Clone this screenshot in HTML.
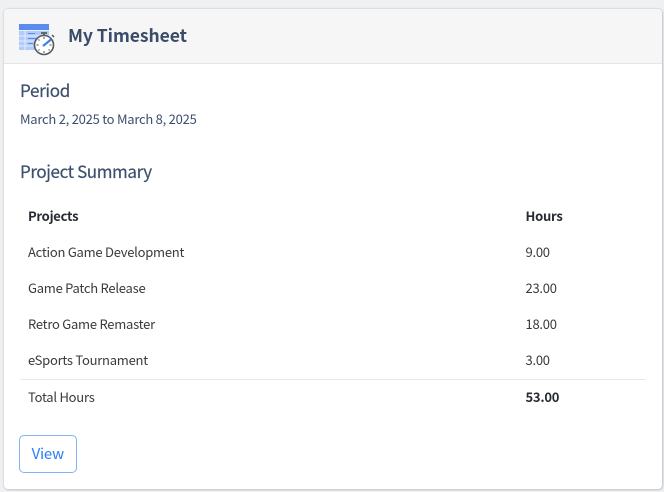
<!DOCTYPE html>
<html>
<head>
<meta charset="utf-8">
<style>
html,body{margin:0;padding:0;width:664px;height:492px;overflow:hidden;background:#eff0f2;}
body{font-family:"Noto Sans CJK JP","Liberation Sans",sans-serif;position:relative;}
.card{position:absolute;left:4px;top:9px;width:658px;height:480px;background:#fff;border-radius:4px;box-shadow:0 0 2px rgba(0,0,0,.2),1px 1px 2px rgba(0,0,0,.12);overflow:hidden;}
.head{position:absolute;left:0;top:0;width:658px;height:55px;background:#f6f6f7;border-bottom:1px solid #e6e6e8;box-sizing:border-box;}
.t{position:absolute;white-space:nowrap;line-height:20px;}
.h{color:#3c4f6d;}
.s{-webkit-text-stroke:.2px #3c4f6d;}
.b{color:#3a3a3a;font-size:13px;letter-spacing:-.25px;}
.bold{font-weight:700;color:#262b33;}
.line{position:absolute;left:19.500px;top:379px;width:626.500px;height:1px;background:#e8e8e8;}
.btn{position:absolute;left:19px;top:435px;width:57.500px;height:38px;box-sizing:border-box;border:1px solid #7fb2fd;border-radius:5px;color:#2b7cf6;font-size:15px;letter-spacing:-.2px;line-height:35px;text-align:center;background:#fff;}
</style>
</head>
<body>
<div class="card"><div class="head"></div></div>
<svg style="position:absolute;left:19px;top:24px" width="38" height="32" viewBox="0 0 38 32">
<rect x="0" y="0" width="30" height="26" fill="#b3cbfb"/>
<rect x="0" y="0" width="30" height="6" fill="#5a8cf0"/>
<rect x="0" y="6" width="30" height="1" fill="#e8effe"/>
<path d="M6 7v19M0 12h30M0 17h20M0 22h14" stroke="#e6eefe" stroke-width="1" fill="none"/>
<path d="M9 9.500h7M9 14.500h8M9 19.500h5" stroke="#5a8cf0" stroke-width="1" fill="none"/>
<rect x="22" y="8" width="6" height="2" fill="#666"/>
<rect x="24" y="9" width="2" height="3" fill="#666"/>
<path d="M33 11l2 2" stroke="#555" stroke-width="1.500"/>
<circle cx="25" cy="21" r="9.500" fill="#fff" stroke="#55585c" stroke-width="1.600"/>
<path d="M24 22L32 15.500" stroke="#3f80f2" stroke-width="2.200"/>
<path d="M25 13v2M25 27v2M17.500 21h2M30.500 21h2M19.500 15.500l1 1M29.500 25.500l1 1M19.500 26.500l1-1" stroke="#555" stroke-width="1"/>
</svg>
<div class="t h" style="left:68px;top:26px;font-size:17.500px;font-weight:700;color:#3a4c69;letter-spacing:-.05px;">My Timesheet</div>
<div class="t h s" style="left:20px;top:80px;font-size:17px;letter-spacing:-.3px;">Period</div>
<div class="t h" style="left:20px;top:108.500px;font-size:13px;letter-spacing:-.25px;">March 2, 2025 to March 8, 2025</div>
<div class="t h s" style="left:20px;top:161px;font-size:17px;letter-spacing:-.4px;">Project Summary</div>
<div class="t b bold" style="left:28px;top:205.500px;">Projects</div>
<div class="t b bold" style="left:525.500px;top:205.500px;">Hours</div>
<div class="t b" style="left:28px;top:241.500px;">Action Game Development</div>
<div class="t b" style="left:525.500px;top:241.500px;">9.00</div>
<div class="t b" style="left:28px;top:277.500px;">Game Patch Release</div>
<div class="t b" style="left:525.500px;top:277.500px;">23.00</div>
<div class="t b" style="left:28px;top:313.500px;">Retro Game Remaster</div>
<div class="t b" style="left:525.500px;top:313.500px;">18.00</div>
<div class="t b" style="left:28px;top:349.500px;">eSports Tournament</div>
<div class="t b" style="left:525.500px;top:349.500px;">3.00</div>
<div class="line"></div>
<div class="t b" style="left:28px;top:386.500px;">Total Hours</div>
<div class="t b bold" style="left:525.500px;top:386.500px;">53.00</div>
<div class="btn">View</div>
</body>
</html>
